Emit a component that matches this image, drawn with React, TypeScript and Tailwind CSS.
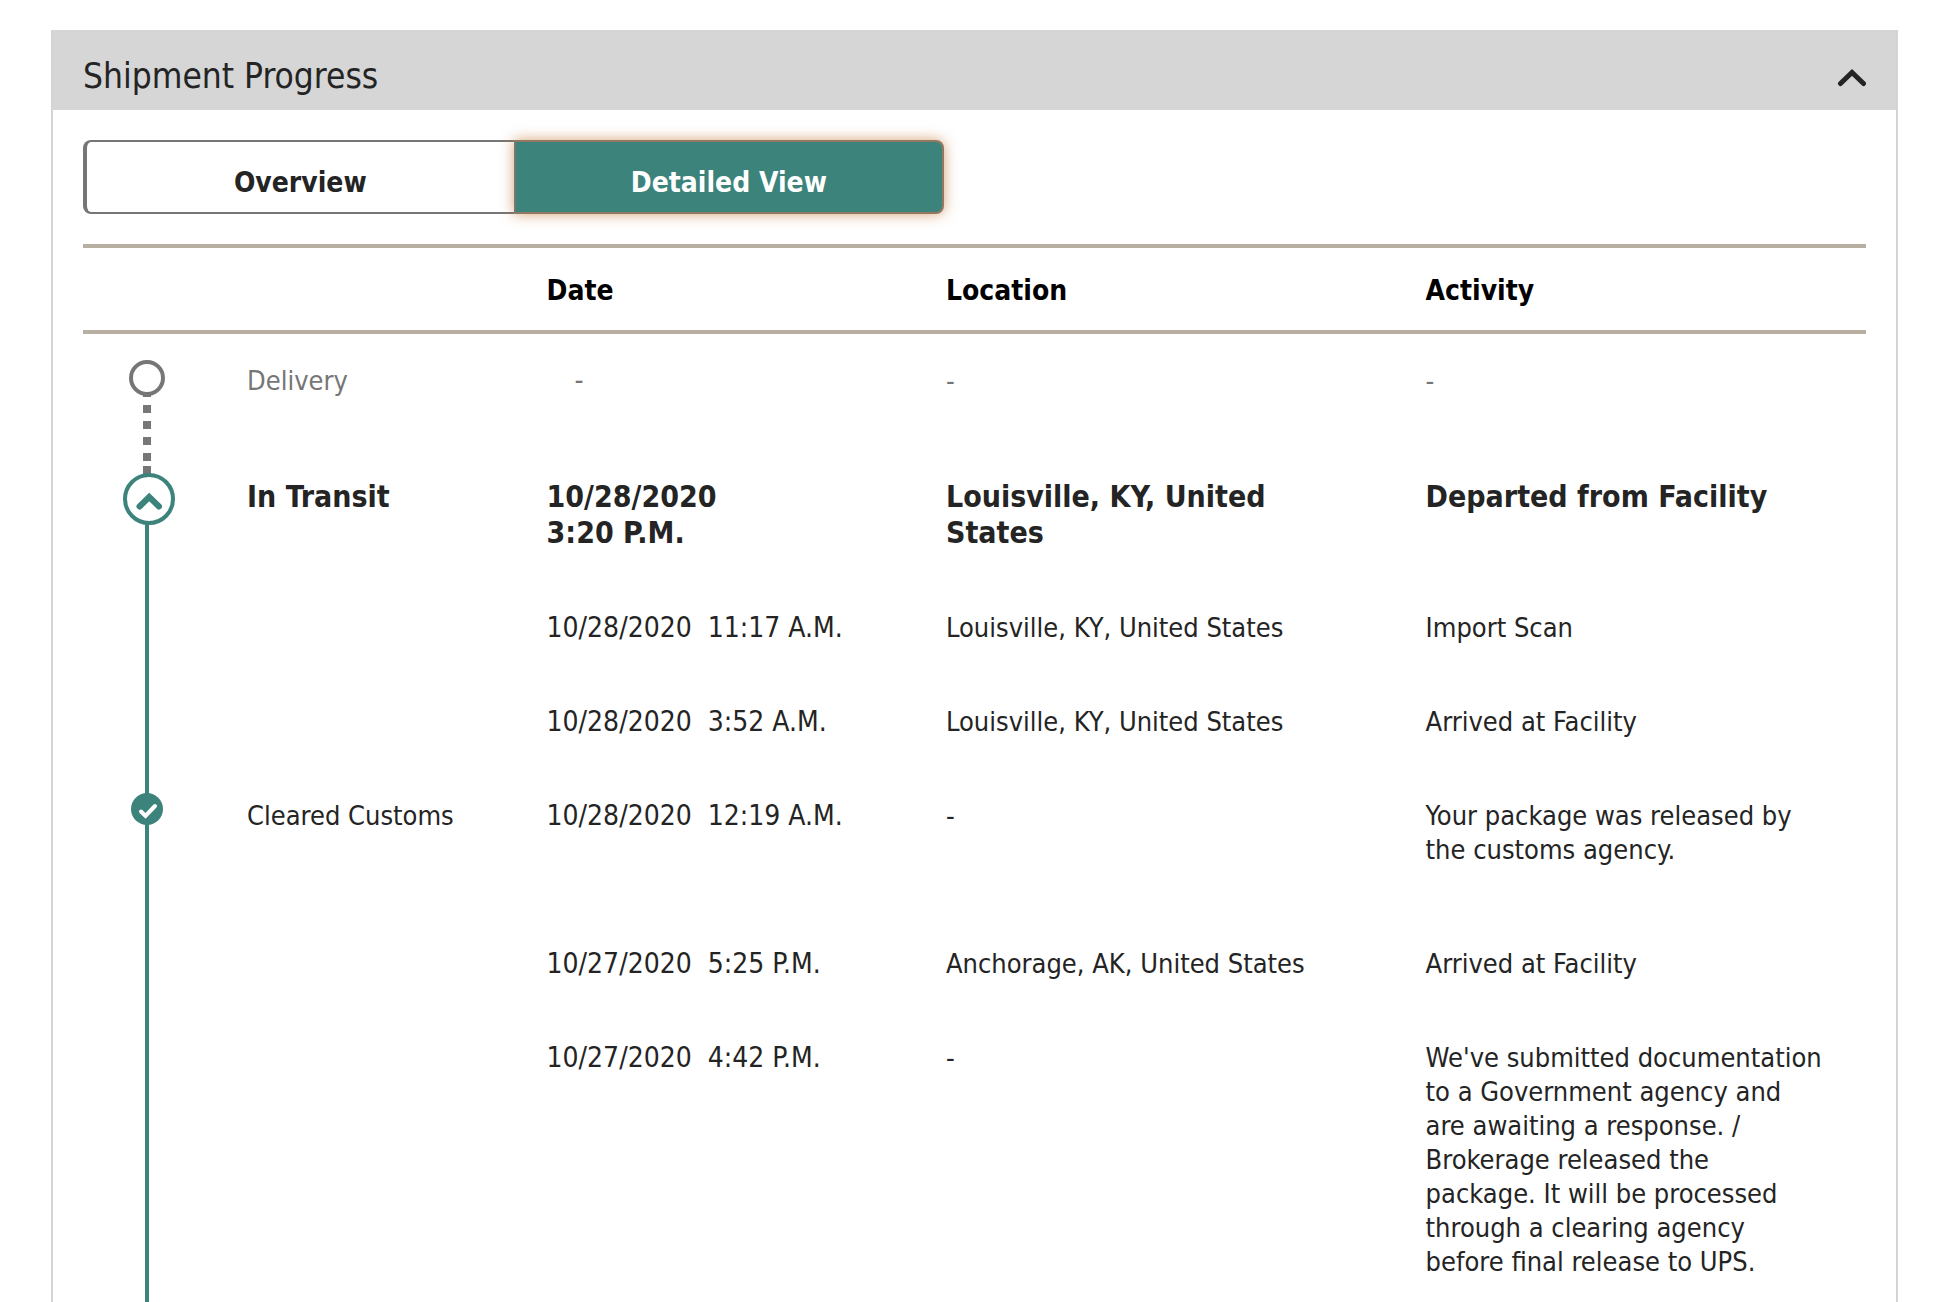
import { ReactNode } from "react";
import { clsx } from "clsx";

type Marker = "pending" | "current" | "done";

interface Scan {
  status?: string;
  marker?: Marker;
  date: string;
  time?: string;
  location: string;
  activity: string;
}

const scans: Scan[] = [
  { status: "Delivery", marker: "pending", date: "-", location: "-", activity: "-" },
  {
    status: "In Transit",
    marker: "current",
    date: "10/28/2020",
    time: "3:20 P.M.",
    location: "Louisville, KY, United States",
    activity: "Departed from Facility",
  },
  { date: "10/28/2020", time: "11:17 A.M.", location: "Louisville, KY, United States", activity: "Import Scan" },
  { date: "10/28/2020", time: "3:52 A.M.", location: "Louisville, KY, United States", activity: "Arrived at Facility" },
  {
    status: "Cleared Customs",
    marker: "done",
    date: "10/28/2020",
    time: "12:19 A.M.",
    location: "-",
    activity: "Your package was released by the customs agency.",
  },
  { date: "10/27/2020", time: "5:25 P.M.", location: "Anchorage, AK, United States", activity: "Arrived at Facility" },
  {
    date: "10/27/2020",
    time: "4:42 P.M.",
    location: "-",
    activity:
      "We've submitted documentation to a Government agency and are awaiting a response. / Brokerage released the package. It will be processed through a clearing agency before final release to UPS.",
  },
];

const PendingMarker = () => (
  <svg className="absolute top-6 left-[46px]" width="36" height="116" viewBox="0 0 36 116" aria-hidden="true">
    <circle cx="18" cy="20" r="16" fill="#fff" stroke="#767676" strokeWidth="4" />
    <path d="M14 36h8v3h-8zM14 47h8v8h-8zM14 63h8v8h-8zM14 79h8v8h-8zM14 95h8v8h-8zM14 108h8v8h-8z" fill="#767676" />
  </svg>
);

const CurrentMarker = () => (
  <button type="button" aria-label="Collapse In Transit" className="absolute top-6 left-10">
    <svg className="block" width="52" height="52" viewBox="0 0 52 52" aria-hidden="true">
      <circle cx="26" cy="26" r="24" fill="#fff" stroke="#3c837c" strokeWidth="4" />
      <path d="M16.5 33.5L26.2 24L36 33.5" fill="none" stroke="#3c837c" strokeWidth="6" strokeLinecap="round" />
    </svg>
  </button>
);

const DoneMarker = () => (
  <svg className="absolute top-6 left-12" width="32" height="32" viewBox="0 0 32 32" aria-hidden="true">
    <circle cx="16" cy="16" r="16" fill="#3c837c" />
    <path d="M10 18.5L14.5 23L24 13" fill="none" stroke="#fff" strokeWidth="4" strokeLinecap="round" />
  </svg>
);

const Rail = ({ marker }: { marker?: Marker }) => (
  <>
    {marker !== "pending" && (
      <span className={clsx("absolute bottom-0 left-[62px] w-1 bg-[#3c837c]", marker === "current" ? "top-12" : "top-0")} />
    )}
    {marker === "pending" && <PendingMarker />}
    {marker === "current" && <CurrentMarker />}
    {marker === "done" && <DoneMarker />}
  </>
);

const Tab = ({ active, children }: { active?: boolean; children: ReactNode }) => (
  <button
    type="button"
    role="tab"
    aria-selected={!!active}
    className={clsx(
      "flex-1 border-2 pt-6 pb-3 text-center font-bold",
      active
        ? "rounded-r-lg border-[#927860] border-l-[#767676] bg-[#3c837c] text-white shadow-[0_0_14px_rgba(190,110,40,0.65)]"
        : "rounded-l-lg border-r-0 border-l-4 border-[#767676] bg-white"
    )}
  >
    {children}
  </button>
);

const App = () => {
  return (
    <main className="min-h-screen bg-white pt-[30px] pr-11 pl-[51px] font-['DejaVu_Sans_Condensed',Tahoma,'Noto_Sans',sans-serif] text-[28px] leading-[34px] text-[#242424]">
      <section className="border-x-2 border-[#d4d4d4]">
        <header className="flex items-center justify-between bg-[#d6d6d6] px-[30px] pt-6 pb-3">
          <h2 className="text-[35px] leading-[44px]">Shipment Progress</h2>
          <button type="button" aria-label="Collapse Shipment Progress">
            <svg className="block" width="30" height="22" viewBox="0 0 30 22" aria-hidden="true">
              <path d="M4.5 18.5L16 7.5L27.5 18.5" fill="none" stroke="#242424" strokeWidth="5" strokeLinecap="round" />
            </svg>
          </button>
        </header>

        <div className="px-[30px] pt-[30px]">
          <div role="tablist" className="flex w-[48.3%]">
            <Tab>Overview</Tab>
            <Tab active>Detailed View</Tab>
          </div>

          <table className="mt-[30px] w-full table-fixed border-collapse text-left">
            <colgroup>
              <col className="w-[9.2%]" />
              <col className="w-[16.8%]" />
              <col className="w-[22.4%]" />
              <col className="w-[26.9%]" />
              <col />
            </colgroup>
            <thead>
              <tr className="border-y-4 border-[#b8afa3] text-black">
                <td />
                <td />
                <th scope="col" className="pt-[26px] pb-[22px]">Date</th>
                <th scope="col" className="pt-[26px] pb-[22px]">Location</th>
                <th scope="col" className="pt-[26px] pb-[22px]">Activity</th>
              </tr>
            </thead>
            <tbody>
              {scans.map((scan, i) => {
                const current = scan.marker === "current";
                const pending = scan.marker === "pending";
                const cell = clsx(
                  pending ? "pt-[30px] pb-[51px]" : "pt-[30px]",
                  scan.marker === "done" && "pb-[50px]",
                  !pending && scan.marker !== "done" && "pb-[30px]"
                );
                const text = clsx(cell, !current && "text-[27px]");
                return (
                  <tr
                    key={i}
                    className={clsx("align-top", current && "text-[30px] leading-[36px] font-bold", pending && "text-[#767676]")}
                  >
                    <td className="relative">
                      <Rail marker={scan.marker} />
                    </td>
                    <td className={text}>{scan.status}</td>
                    <td className={clsx(cell, pending && "pl-7")}>
                      {scan.date}
                      {current && <br />}
                      {!current && scan.time && "\u00a0\u00a0"}
                      {scan.time}
                    </td>
                    <td className={clsx(text, "pr-16")}>{scan.location}</td>
                    <td className={clsx(text, "pr-10")}>{scan.activity}</td>
                  </tr>
                );
              })}
            </tbody>
          </table>
        </div>
      </section>
    </main>
  );
};

export default App;
